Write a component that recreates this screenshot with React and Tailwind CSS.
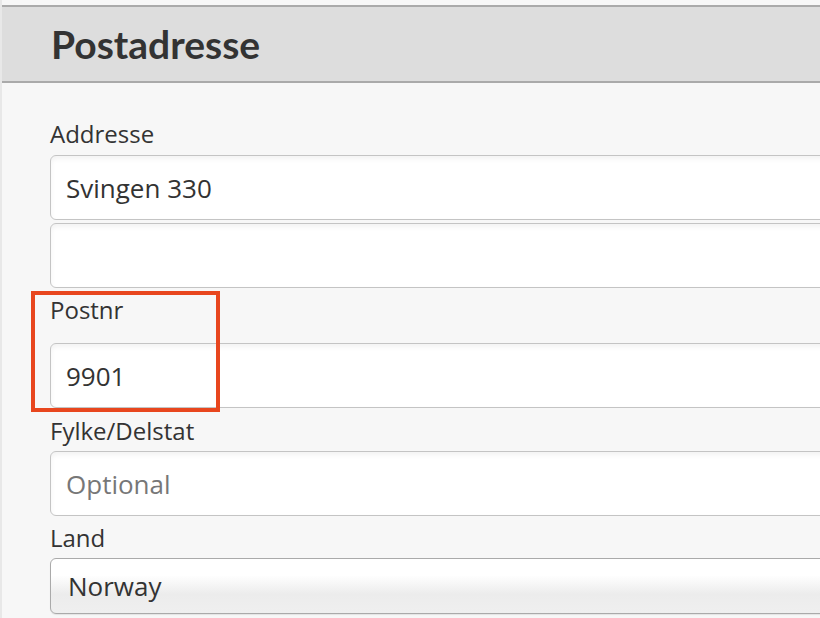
export default function App() {
  const body = { fontFamily: "'Open Sans', 'Noto Sans', sans-serif" }

  return (
    <div className="relative h-[618px] w-[820px] overflow-hidden border-l-2 border-[#e8e8e8] bg-[#f7f7f7] pt-[5px]">
      <header className="flex h-[78px] w-[1000px] items-center border-y-2 border-[#aaaaaa] bg-[#dddddd] pl-[49px]">
        <h1
          className="text-[39px] font-bold leading-none text-[#333333]"
          style={{ fontFamily: "Lato, 'Open Sans', sans-serif" }}
        >
          Postadresse
        </h1>
      </header>

      <form className="flex w-[1100px] flex-col pl-[48px]" style={body}>
        <label className="mt-[36px] text-[24px] leading-[30px] text-[#333333]">Addresse</label>
        <input
          readOnly
          defaultValue="Svingen 330"
          className="mt-[6px] h-[65px] rounded-[6px] border-[1.5px] border-[#c4c4c4] bg-white px-[15px] text-[26px] text-[#333333] shadow-[inset_0_3px_5px_rgba(0,0,0,0.05)] outline-none"
        />
        <input
          readOnly
          className="mt-[3px] h-[65px] rounded-[6px] border-[1.5px] border-[#c4c4c4] bg-white px-[15px] text-[26px] text-[#333333] shadow-[inset_0_3px_5px_rgba(0,0,0,0.05)] outline-none"
        />

        <label className="mt-[7px] text-[24px] leading-[30px] text-[#333333]">Postnr</label>
        <input
          readOnly
          defaultValue="9901"
          className="mt-[18px] h-[65px] rounded-[6px] border-[1.5px] border-[#c4c4c4] bg-white px-[15px] text-[26px] text-[#333333] shadow-[inset_0_3px_5px_rgba(0,0,0,0.05)] outline-none"
        />

        <label className="mt-[8px] text-[24px] leading-[30px] text-[#333333]">Fylke/Delstat</label>
        <input
          readOnly
          placeholder="Optional"
          className="mt-[5px] h-[65px] rounded-[6px] border-[1.5px] border-[#c4c4c4] bg-white px-[15px] text-[26px] text-[#333333] shadow-[inset_0_3px_5px_rgba(0,0,0,0.05)] outline-none placeholder:text-[#777777]"
        />

        <label className="mt-[7px] text-[24px] leading-[30px] text-[#333333]">Land</label>
        <div className="mt-[5px] flex h-[56px] items-center rounded-[6px] border-[1.5px] border-[#aaaaaa] bg-[linear-gradient(to_bottom,#ffffff_0%,#ffffff_30%,#ececec_65%,#efefef_100%)] px-[17px] text-[26px] text-[#333333] shadow-[0_1px_1px_rgba(0,0,0,0.08)]">
          Norway
        </div>
      </form>

      <div className="absolute left-[29px] top-[291px] h-[121px] w-[189px] border-4 border-[#e8461e]" />
    </div>
  )
}
